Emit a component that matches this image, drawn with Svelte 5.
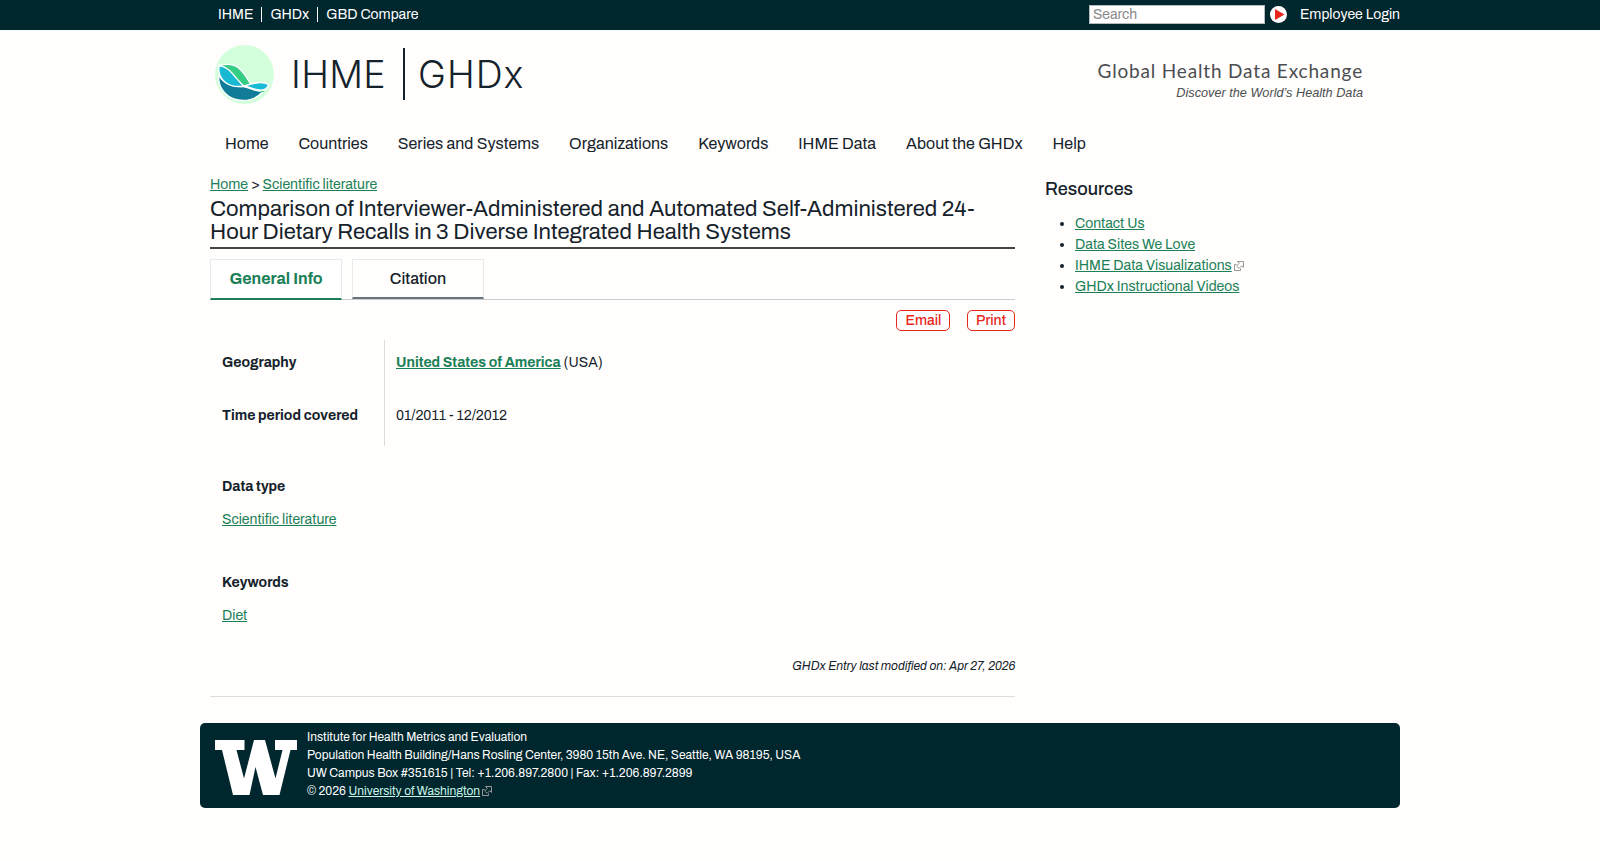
<script lang="ts">
    const topLinks = ["IHME", "GHDx", "GBD Compare"];

    const menu = [
        "Home",
        "Countries",
        "Series and Systems",
        "Organizations",
        "Keywords",
        "IHME Data",
        "About the GHDx",
        "Help",
    ];

    const resources = [
        { label: "Contact Us", external: false },
        { label: "Data Sites We Love", external: false },
        { label: "IHME Data Visualizations", external: true },
        { label: "GHDx Instructional Videos", external: false },
    ];
</script>

{#snippet extIcon()}
    <svg class="ext" width="10" height="10" viewBox="0 0 10 10" fill="none" stroke="currentColor">
        <path d="M2.500 3.500h-2v6h6v-2" />
        <path d="M3.500.5h6v6L7.700 4.700 5 7.400 2.600 5l2.700-2.700z" />
    </svg>
{/snippet}

<div class="topbar">
    <div class="wrap topbar-inner">
        <ul class="top-links">
            {#each topLinks as link}
                <li>{link}</li>
            {/each}
        </ul>
        <div class="top-right">
            <input class="search" type="text" placeholder="Search" />
            <svg class="go" width="17" height="17" viewBox="0 0 17 17">
                <circle cx="8.5" cy="8.5" r="8.5" fill="#fff" />
                <path d="M5 3v11l9.500-5.500z" fill="#e8261c" />
            </svg>
            <span class="login">Employee Login</span>
        </div>
    </div>
</div>

<header class="wrap header">
    <div class="logo">
        <svg width="59" height="59" viewBox="0 0 59 59">
            <circle cx="29.5" cy="29.5" r="29.5" fill="#d4ffdc" />
            <g stroke="#fff" stroke-width="1.3" stroke-linejoin="round">
                <path d="M3.800 30C8 38 16 42 28 41.500c7 1 12 5 20 5C43 52 36 55.500 28.500 55.500 13 55.500 2.500 44 3.800 30z" fill="#107c97" />
                <path d="M4 20.500C16 20 20 34 29 41 15 43.500 2 36 4 20.500z" fill="#18b9d2" />
                <path d="M4 20.500C21 16 27 24 35.500 39L29 41C20 34 16 22 4 20.500z" fill="#35cc84" />
                <path d="M29 41c8-2 16-5.500 24.500-1.500-1 5-4 6-9 5.500-5 0-10-3.500-15.500-4z" fill="#18b9d2" />
            </g>
            <path d="M43.500 46h6l-1.500 1.300z" fill="#35cc84" />
        </svg>
        <span class="logo-ihme">IHME</span>
        <span class="logo-bar"></span>
        <span class="logo-ghdx">GHDx</span>
    </div>
    <div class="slogan">
        <div class="slogan-name">Global Health Data Exchange</div>
        <div class="slogan-sub">Discover the World’s Health Data</div>
    </div>
</header>

<nav class="wrap menu">
    {#each menu as item}
        <a href="#top">{item}</a>
    {/each}
</nav>

<div class="wrap columns">
    <main>
        <div class="breadcrumb"><a href="#top">Home</a> &gt; <a href="#top">Scientific literature</a></div>
        <h1>Comparison of Interviewer-Administered and Automated Self-Administered 24-Hour Dietary Recalls in 3 Diverse Integrated Health Systems</h1>

        <div class="tabs">
            <div class="tab active">General Info</div>
            <div class="tab">Citation</div>
        </div>

        <div class="actions">
            <button class="email">Email</button>
            <button class="print">Print</button>
        </div>

        <div class="fields">
            <div class="label">Geography</div>
            <div class="value"><a class="country" href="#top">United States of America</a> (USA)</div>
            <div class="label">Time period covered</div>
            <div class="value">01/2011 - 12/2012</div>
        </div>

        <section class="block">
            <h2>Data type</h2>
            <a href="#top">Scientific literature</a>
        </section>
        <section class="block">
            <h2>Keywords</h2>
            <a href="#top">Diet</a>
        </section>

        <div class="modified"><em>GHDx Entry last modified on: Apr 27, 2026</em></div>
    </main>

    <aside>
        <h3>Resources</h3>
        <ul>
            {#each resources as item}
                <li><a href="#top">{item.label}</a>{#if item.external}{@render extIcon()}{/if}</li>
            {/each}
        </ul>
    </aside>
</div>

<footer class="wrap footer">
    <svg width="82" height="55" viewBox="0 0 82 55">
        <path d="M0 0h29.500v10h-8l7.500 28.500L39 0h11l10.500 38.500L67.500 10H60V0h22v10h-6.500L64.500 55H48L40.500 27 34.500 55H18L7 10H0z" fill="#fff" />
    </svg>
    <div class="address">
        <div>Institute for Health Metrics and Evaluation</div>
        <div>Population Health Building/Hans Rosling Center, 3980 15th Ave. NE, Seattle, WA 98195, USA</div>
        <div>UW Campus Box #351615 | Tel: +1.206.897.2800 | Fax: +1.206.897.2899</div>
        <div>© 2026 <a href="#top">University of Washington</a>{@render extIcon()}</div>
    </div>
</footer>

<style>
    :global(body) {
        background: #fffefc;
        color: #15222b;
        font: 14px/21px Archivo, "Liberation Sans", Arial, sans-serif;
    }

    .wrap {
        width: 1200px;
        margin: 0 auto;
        box-sizing: border-box;
    }

    a {
        color: #1b8057;
    }

    ul {
        margin: 0;
        padding: 0;
    }

    .topbar {
        height: 30px;
        background: #00262e;
        color: #fff;
    }

    .topbar-inner {
        display: flex;
        justify-content: space-between;
        align-items: center;
        height: 29px;
    }

    .top-links {
        display: flex;
        padding-left: 10px;
        list-style: none;
    }

    .top-links li {
        padding: 0 8px;
        line-height: 15px;
    }

    .top-links li + li {
        border-left: 1px solid #fff;
    }

    .top-right {
        display: flex;
        align-items: center;
    }

    .search {
        box-sizing: border-box;
        width: 176px;
        height: 19px;
        padding: 0 3px 1px;
        border: 1px solid #b5bcbe;
        background: #fff;
        font: inherit;
        line-height: 16px;
    }

    .search::placeholder {
        color: #8a8a8a;
    }

    .go {
        margin: 0 13px 0 5px;
    }

    .header {
        display: flex;
        justify-content: space-between;
        height: 90px;
        padding: 15px 37px 0 15px;
    }

    .logo {
        display: flex;
        align-items: flex-start;
        font-family: Inter, sans-serif;
        font-weight: 300;
        font-size: 37.5px;
        line-height: 60px;
    }

    .logo-ihme {
        width: 109px;
        padding-left: 17px;
        letter-spacing: 0.3px;
    }

    .logo-bar {
        width: 2px;
        height: 52px;
        margin: 3px 13px 0 3px;
        background: #15222b;
    }

    .logo-ghdx {
        letter-spacing: 1px;
    }

    .slogan {
        padding-top: 13px;
        text-align: right;
        color: #4b4d50;
    }

    .slogan-name {
        font: 19px/26px Lato, sans-serif;
        letter-spacing: 0.83px;
    }

    .slogan-sub {
        font: italic 12.7px/18px "Liberation Sans", Arial, sans-serif;
    }

    .menu {
        display: flex;
        gap: 30px;
        height: 54px;
        padding: 13px 25px 0;
        font-size: 16px;
        line-height: 22px;
    }

    .menu a {
        color: #15222b;
        text-decoration: none;
    }

    .columns {
        display: flex;
        gap: 30px;
        padding: 0 10px;
    }

    main {
        width: 805px;
    }

    h1 {
        margin: 3px 0 0;
        padding-bottom: 3px;
        border-bottom: 2px solid #424442;
        font-size: 22px;
        line-height: 23px;
        font-weight: 400;
    }

    .tabs {
        display: flex;
        gap: 10px;
        height: 40px;
        margin-top: 10px;
        border-bottom: 1px solid #c8cccf;
    }

    .tab {
        box-sizing: border-box;
        width: 132px;
        height: 40px;
        border: 1px solid #e6e8e9;
        border-bottom: 2px solid #69747c;
        text-align: center;
        font-size: 16px;
        font-weight: 500;
        line-height: 37px;
    }

    .tab.active {
        height: 41px;
        border-bottom-color: #1b8057;
        background: #fff;
        color: #1b8057;
        font-weight: 700;
    }

    .actions {
        display: flex;
        justify-content: flex-end;
        gap: 17px;
        margin-top: 10px;
    }

    .actions button {
        box-sizing: border-box;
        height: 21px;
        padding: 0;
        border: 1px solid #e8261c;
        border-radius: 5px;
        background: #fff;
        color: #e8261c;
        font: inherit;
        font-weight: 500;
        line-height: 18px;
    }

    .actions .email {
        width: 54px;
        padding-left: 1px;
    }

    .actions .print {
        width: 48px;
    }

    .fields {
        display: grid;
        grid-template-columns: 175px 1fr;
        grid-auto-rows: 53px;
        margin-top: 9px;
    }

    .label {
        padding: 12px 0 0 12px;
        border-right: 1px solid #dcdddd;
        font-weight: 700;
    }

    .value {
        padding: 12px 0 0 11px;
    }

    .country {
        font-weight: 700;
    }

    .block {
        height: 66px;
        margin-top: 30px;
        padding: 0 12px;
    }

    .block h2 {
        margin: 0 0 12px;
        font-size: 14px;
        line-height: 21px;
    }

    .modified {
        height: 40px;
        margin-top: 18px;
        border-bottom: 1px solid #dcdddd;
        text-align: right;
        font-size: 12px;
        line-height: 20px;
    }

    .modified em {
        margin-right: -0.5px;
    }

    h3 {
        margin: 4px 0 13px;
        font-size: 18px;
        line-height: 22px;
        font-weight: 500;
    }

    aside ul {
        padding-left: 30px;
    }

    .ext {
        margin-left: 2px;
        vertical-align: -1px;
        color: #999;
    }

    .footer {
        display: flex;
        gap: 10px;
        height: 85px;
        margin-top: 26px;
        padding: 5px 15px;
        border-radius: 5px;
        background: #00262e;
        color: #fff;
        font-size: 12px;
        line-height: 18px;
    }

    .footer > svg {
        margin-top: 12px;
    }

    .footer a {
        color: #c8f5e8;
    }
</style>
